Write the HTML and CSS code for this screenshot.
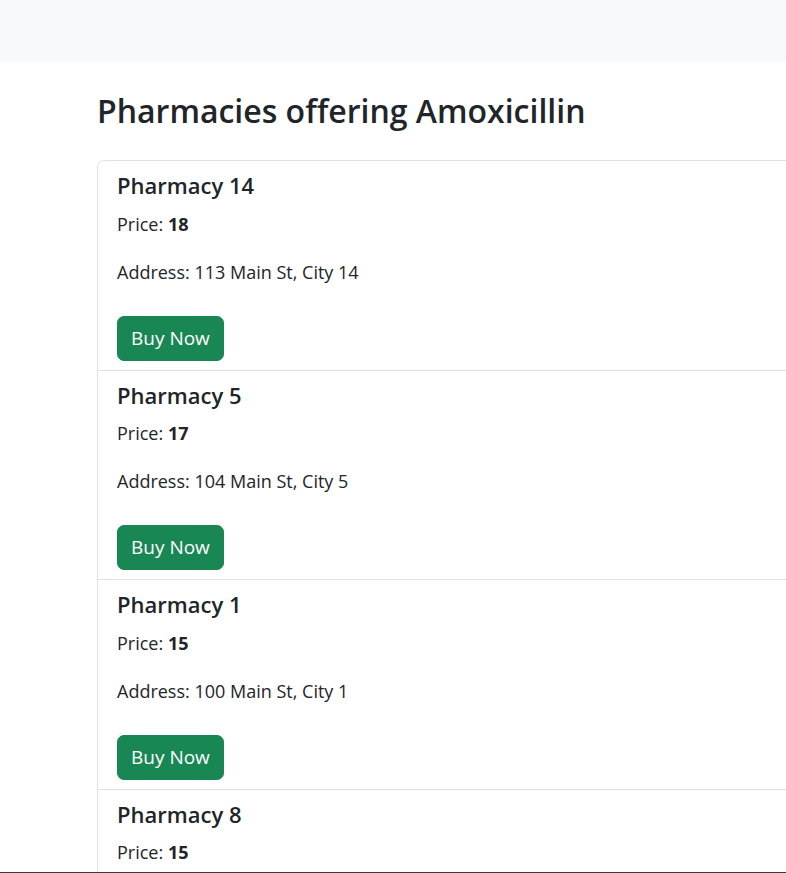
FILE: index.html
```html
<!DOCTYPE html>
<html lang="en">
<head>
<meta charset="utf-8">
<title>Pharmacies offering Amoxicillin</title>
<link rel="stylesheet" href="styles.css">
</head>
<body>
<nav class="topbar"></nav>
<main class="container">
  <h2 class="page-title">Pharmacies offering Amoxicillin</h2>
  <ul class="list">
    <li class="item">
      <h5 class="item-title">Pharmacy 14</h5>
      <p class="line">Price: <strong>18</strong></p>
      <p class="line">Address: 113 Main St, City 14</p>
      <button class="btn">Buy Now</button>
    </li>
    <li class="item">
      <h5 class="item-title">Pharmacy 5</h5>
      <p class="line">Price: <strong>17</strong></p>
      <p class="line">Address: 104 Main St, City 5</p>
      <button class="btn">Buy Now</button>
    </li>
    <li class="item">
      <h5 class="item-title">Pharmacy 1</h5>
      <p class="line">Price: <strong>15</strong></p>
      <p class="line">Address: 100 Main St, City 1</p>
      <button class="btn">Buy Now</button>
    </li>
    <li class="item">
      <h5 class="item-title">Pharmacy 8</h5>
      <p class="line">Price: <strong>15</strong></p>
      <p class="line">Address: 107 Main St, City 8</p>
      <button class="btn">Buy Now</button>
    </li>
  </ul>
</main>
<div class="frame-edge"></div>
</body>
</html>
```
FILE: styles.css
```css
html, body {
  margin: 0;
  padding: 0;
  overflow: hidden;
  background: #fff;
}
body {
  font-family: "Open Sans", "Noto Sans", "Liberation Sans", sans-serif;
  font-size: 18px;
  line-height: 1.5;
  color: #212529;
}
.topbar {
  display: block;
  height: 62px;
  background: #f8f9fa;
}
.container {
  padding-left: 97px;
  width: 1100px;
}
.page-title {
  margin: 28px 0 28px;
  font-size: 32px;
  font-weight: 600;
  line-height: 42px;
}
.list {
  list-style: none;
  margin: 0;
  padding: 0;
  border: 1px solid #dee2e6;
  border-radius: 7px;
  display: flex;
  flex-direction: column;
}
.item {
  padding: 9px 18px 9px 19px;
  border-bottom: 1px solid #dee2e6;
}
.item:last-child {
  border-bottom: 0;
}
.item-title {
  margin: 0 0 10px;
  font-size: 22px;
  font-weight: 600;
  line-height: 30.5px;
}
.line {
  margin: 0 0 21px;
  line-height: 27px;
}
.line + .line {
  margin-bottom: 30px;
}
.line strong {
  font-weight: 700;
}
.btn {
  display: inline-block;
  font-family: inherit;
  font-size: 19px;
  line-height: 27px;
  padding: 8px 13px;
  height: 45px;
  color: #fff;
  background: #198754;
  border: 1px solid #198754;
  border-radius: 7px;
  cursor: pointer;
}
.frame-edge {
  position: fixed;
  left: 0;
  right: 0;
  bottom: 0;
  height: 1px;
  background: #3a3a3a;
}
```
